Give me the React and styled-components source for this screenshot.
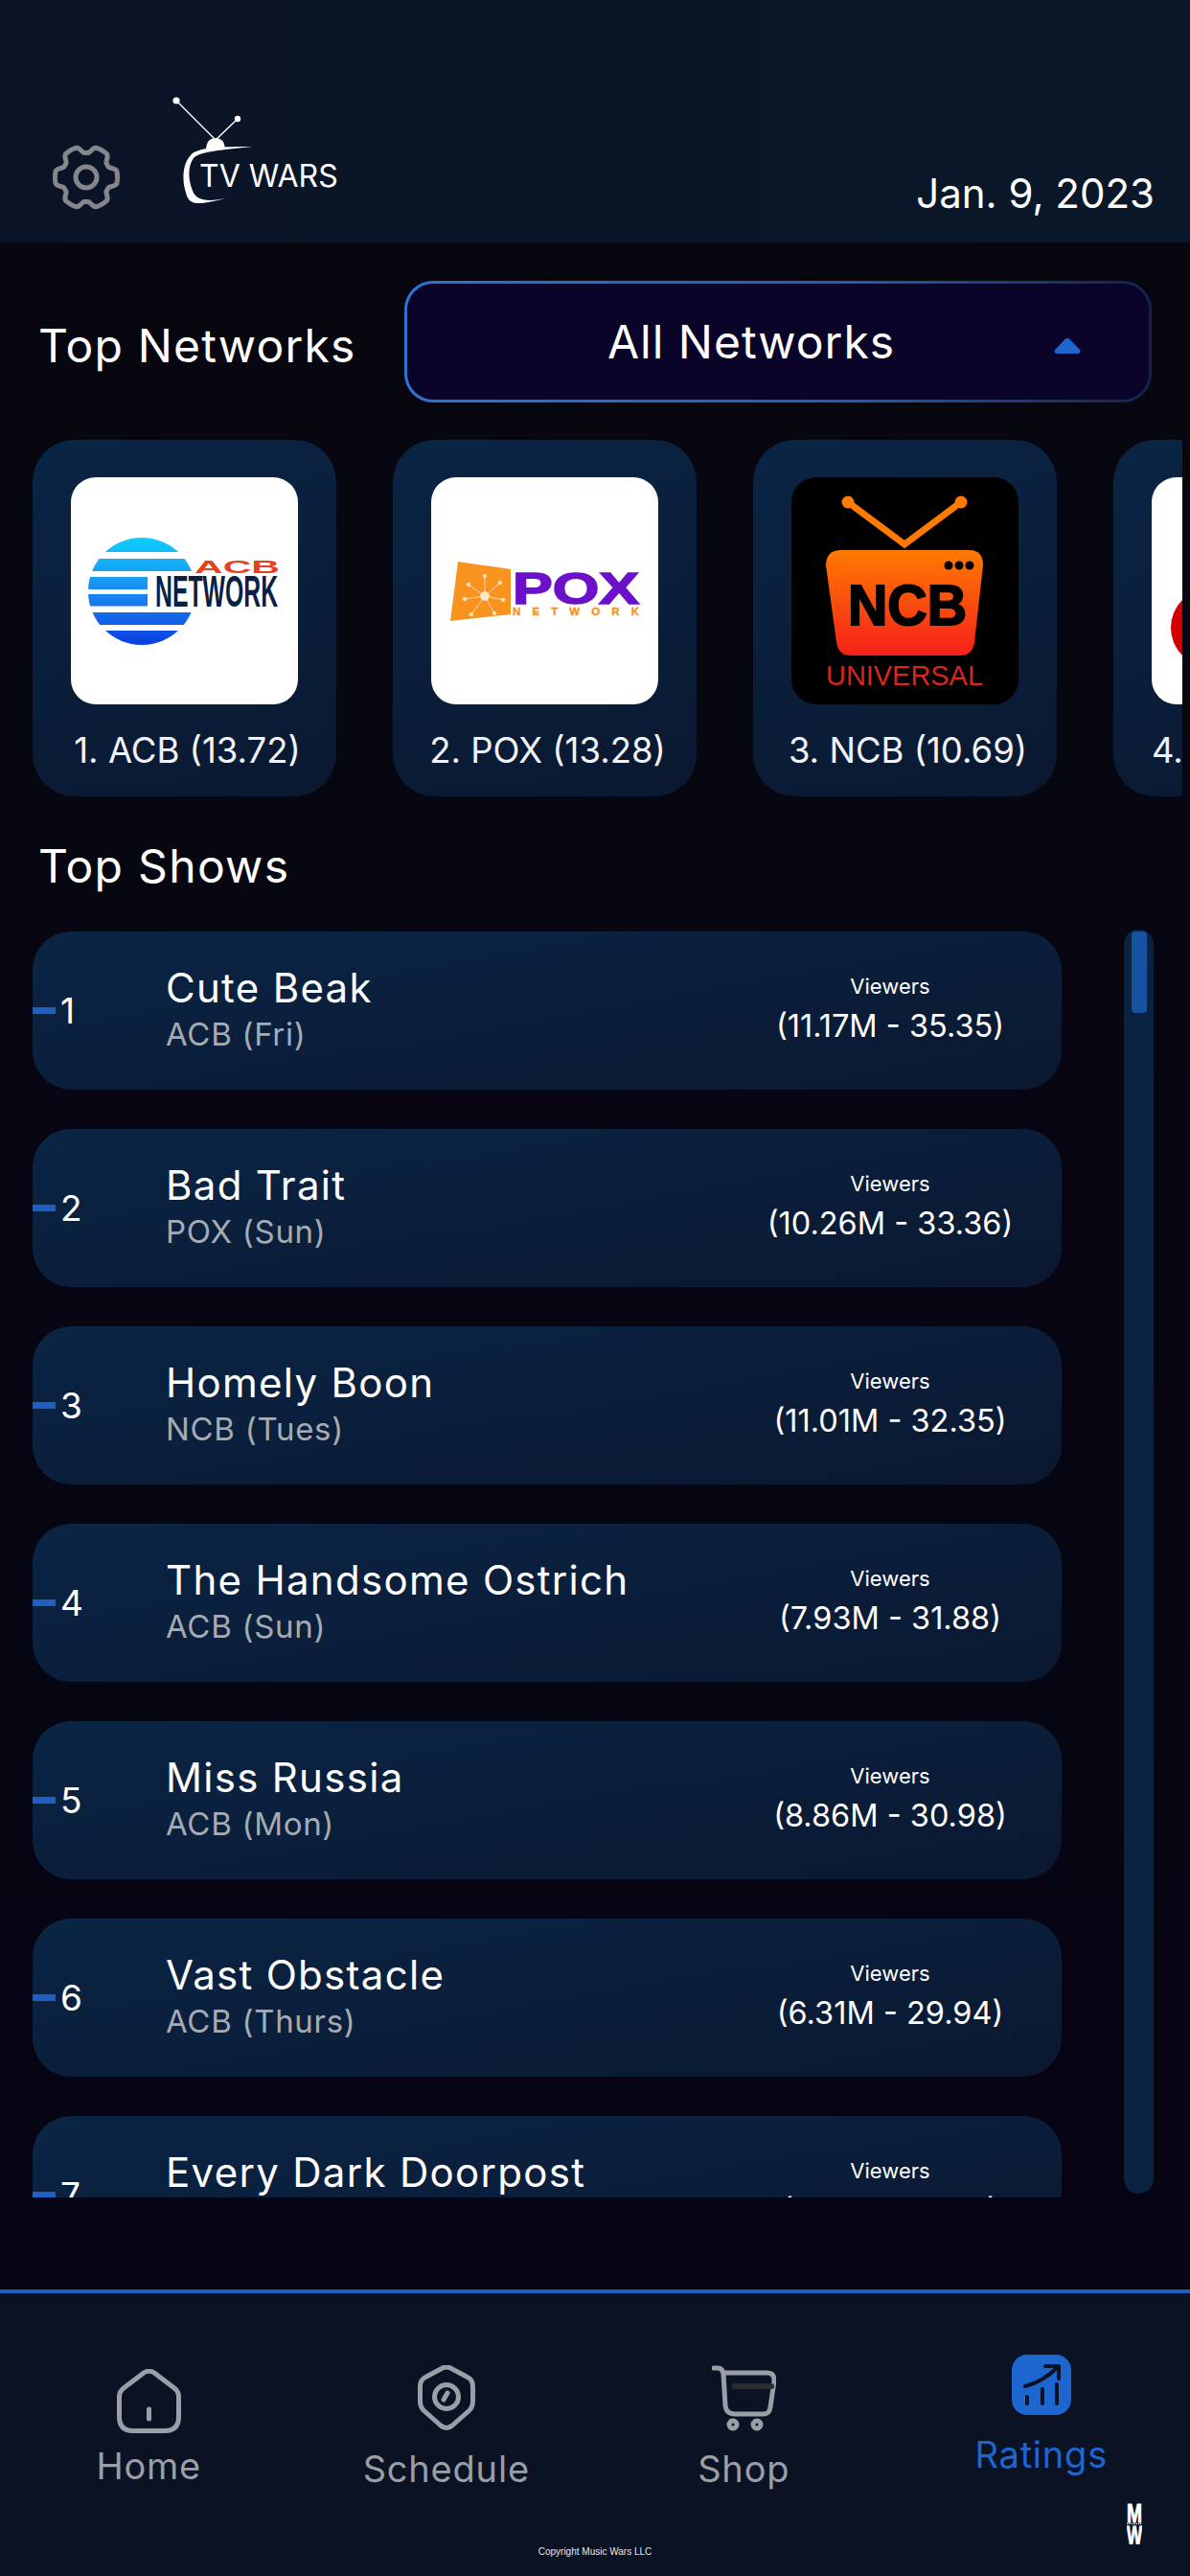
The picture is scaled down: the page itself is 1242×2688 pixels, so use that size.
import React from "react";
import styled, { createGlobalStyle } from "styled-components";

const networks = [
  { label: "1. ACB (13.72)", logo: "acb" },
  { label: "2. POX (13.28)", logo: "pox" },
  { label: "3. NCB (10.69)", logo: "ncb" },
  { label: "4.", logo: "red", partial: true },
];

const shows = [
  { title: "Cute Beak", sub: "ACB (Fri)", range: "(11.17M - 35.35)" },
  { title: "Bad Trait", sub: "POX (Sun)", range: "(10.26M - 33.36)" },
  { title: "Homely Boon", sub: "NCB (Tues)", range: "(11.01M - 32.35)" },
  { title: "The Handsome Ostrich", sub: "ACB (Sun)", range: "(7.93M - 31.88)" },
  { title: "Miss Russia", sub: "ACB (Mon)", range: "(8.86M - 30.98)" },
  { title: "Vast Obstacle", sub: "ACB (Thurs)", range: "(6.31M - 29.94)" },
  { title: "Every Dark Doorpost", sub: "", range: "(6.02M - 29.11)" },
];

// six blunt teeth with narrow notches between them
const gearPath = () => {
  const pts = [];
  for (let i = 0; i < 180; i++) {
    const deg = i * 2;
    const d = Math.abs(((deg + 30) % 60) - 30);
    const s = Math.min(1, Math.max(0, (d - 11) / 15));
    const r = 32.5 - 7 * s * s * (3 - 2 * s);
    const a = (deg * Math.PI) / 180;
    pts.push(`${(35 + r * Math.cos(a)).toFixed(2)} ${(34 + r * Math.sin(a)).toFixed(2)}`);
  }
  return `M${pts.join("L")}Z`;
};

const GearIcon = () => (
  <GearSvg viewBox="0 0 70 68" fill="none" stroke="#85878c" strokeWidth="5">
    <path d={gearPath()} strokeLinejoin="round" />
    <circle cx="35" cy="34" r="11" />
  </GearSvg>
);

const TvLogo = () => (
  <LogoSvg viewBox="0 0 185 120">
    <g fill="#fff">
      <circle cx="9" cy="10" r="3.6" />
      <circle cx="73" cy="29" r="3.2" />
      <path d="M9 10 L50 51 M73 29 L50 51" stroke="#fff" strokeWidth="1.4" />
      <path d="M40 60 Q41 49 50 49 Q59 49 60 60 Z" />
      <path d="M89 58 C62 58 30 58 24 67 C15 76 15 95 19 106 C22 119 30 120 60 112 C40 116 30 114 26 104 C21 92 21 78 27 70 C33 63 62 61 89 58 Z" />
    </g>
    <LogoText x="33" y="100">TV WARS</LogoText>
  </LogoSvg>
);

const AcbLogo = () => (
  <svg viewBox="0 0 237 237" width="237" height="237">
    <defs>
      <clipPath id="acbDisc">
        <circle cx="74" cy="119" r="56" />
      </clipPath>
      <linearGradient id="acbFade" gradientUnits="userSpaceOnUse" x1="0" y1="63" x2="0" y2="175">
        <stop offset="0" stopColor="#10cdfb" />
        <stop offset="0.5" stopColor="#1a8bf0" />
        <stop offset="1" stopColor="#0a3ee0" />
      </linearGradient>
    </defs>
    <g clipPath="url(#acbDisc)" fill="url(#acbFade)">
      <rect x="0" y="63" width="150" height="15" />
      <rect x="0" y="85" width="150" height="13" />
      <rect x="0" y="104" width="80" height="13" />
      <rect x="0" y="122" width="80" height="12.5" />
      <rect x="0" y="141" width="150" height="13" />
      <rect x="0" y="160" width="150" height="15" />
    </g>
    <text x="129" y="100" fontFamily="Liberation Sans" fontWeight="700" fontSize="18" fill="#e8401c" textLength="89" lengthAdjust="spacingAndGlyphs">
      ACB
    </text>
    <text transform="translate(88 135) scale(0.539 1)" fontFamily="Liberation Sans" fontWeight="700" fontSize="46" fill="#0a1f44">
      NETWORK
    </text>
  </svg>
);

const PoxLogo = () => {
  const spokes = [
    [56, 103],
    [39, 112],
    [35, 127],
    [42, 143],
    [66, 142],
    [75, 128],
    [72, 110],
  ];
  return (
    <svg viewBox="0 0 237 237" width="237" height="237">
      <polygon points="28,88 83,96 83,143 20,150" fill="#f7931e" />
      <g stroke="#ffe8c8" strokeWidth="0.8" fill="#ffe8c8">
        <circle cx="56" cy="124" r="4.5" />
        {spokes.map(([x, y]) => (
          <g key={`${x}-${y}`}>
            <line x1="56" y1="124" x2={x} y2={y} />
            <circle cx={x} cy={y} r="1.800" />
          </g>
        ))}
      </g>
      <text x="85" y="132" fontFamily="Liberation Sans" fontWeight="700" fontSize="47" fill="#6a11c9" stroke="#6a11c9" strokeWidth="1.6" textLength="132" lengthAdjust="spacingAndGlyphs">
        POX
      </text>
      <text x="85" y="143.500" fontFamily="Liberation Sans" fontWeight="700" fontSize="11.500" fill="#f7931e" stroke="#f7931e" strokeWidth="0.4" textLength="132">
        NETWORK
      </text>
    </svg>
  );
};

const NcbLogo = () => (
  <svg viewBox="0 0 237 237" width="237" height="237">
    <defs>
      <linearGradient id="ncbFade" x1="0" y1="0" x2="0" y2="1">
        <stop offset="0" stopColor="#ff7a00" />
        <stop offset="1" stopColor="#f5211b" />
      </linearGradient>
    </defs>
    <path d="M59 26 L118 70 L177 26" fill="none" stroke="#ff7a00" strokeWidth="7" strokeLinejoin="miter" />
    <circle cx="59" cy="26" r="6.5" fill="#ff7a00" />
    <circle cx="177" cy="26" r="6.5" fill="#ff7a00" />
    <path d="M52 76 H186 Q200 76 200 92 L191 172 Q189 186 176 186 H62 Q49 186 47 172 L36 92 Q36 76 52 76 Z" fill="url(#ncbFade)" />
    <circle cx="164" cy="92" r="4.5" />
    <circle cx="175" cy="92" r="4.5" />
    <circle cx="186" cy="92" r="4.5" />
    <text x="59" y="154" fontFamily="Liberation Sans" fontWeight="700" fontSize="60" fill="#000" stroke="#000" strokeWidth="2" textLength="124" lengthAdjust="spacingAndGlyphs">
      NCB
    </text>
    <text x="36" y="217" fontFamily="Liberation Sans" fontSize="30" fill="#d9261c" textLength="164" lengthAdjust="spacingAndGlyphs">
      UNIVERSAL
    </text>
  </svg>
);

const RedLogo = () => (
  <svg viewBox="0 0 237 237" width="237" height="237">
    <circle cx="61" cy="157" r="41" fill="#d40000" />
  </svg>
);

const logos = { acb: AcbLogo, pox: PoxLogo, ncb: NcbLogo, red: RedLogo };

const HomeIcon = () => (
  <NavSvg width="67" height="67" viewBox="0 0 67 67">
    <path d="M28 4 Q33.500 0.500 39 4 L60 20 Q64.500 23.500 64.500 29 V50 Q64.500 64.500 50 64.500 H17 Q2.500 64.500 2.500 50 V29 Q2.500 23.500 7 20 Z" />
    <path d="M33.500 42 V52" />
  </NavSvg>
);

const ScheduleIcon = () => (
  <NavSvg width="60" height="69" viewBox="0 0 60 69">
    <path d="M24 4 Q30 0 36 4 L51 12 Q57.500 15 57.500 22 V38 Q57.500 44 53 48 L36 63 Q30 68 24 63 L7 48 Q2.500 44 2.500 38 V22 Q2.500 15 9 12 Z" />
    <circle cx="30" cy="33" r="12.500" />
    <path d="M31 29 L27 36" />
  </NavSvg>
);

const ShopIcon = () => (
  <NavSvg width="67" height="69" viewBox="0 0 67 69">
    <path d="M2 3 H6 Q11 3 12 9 L14 42 Q15 51 24 51 H54 Q60 51 61 44 L65 16 Q65 8 58 8 H13" />
    <path d="M24 22 H62" stroke="#2a2c30" strokeWidth="6" />
    <circle cx="22" cy="62" r="4" />
    <circle cx="47" cy="62" r="4" />
  </NavSvg>
);

const RatingsIcon = () => (
  <svg width="62" height="63" viewBox="0 0 62 63">
    <rect width="62" height="63" rx="16" fill="#1e66cf" />
    <g fill="none" stroke="#0a1224" strokeWidth="4" strokeLinecap="round" strokeLinejoin="round">
      <path d="M14 33 Q33 28 48 13" />
      <path d="M35 12 H49 V25" />
      <path d="M16 44 V51 M32 36 V51 M47 31 V51" />
    </g>
  </svg>
);

const navItems = [
  { label: "Home", icon: HomeIcon, top: 79, gap: 11 },
  { label: "Schedule", icon: ScheduleIcon, top: 75, gap: 16 },
  { label: "Shop", icon: ShopIcon, top: 75, gap: 16 },
  { label: "Ratings", icon: RatingsIcon, top: 64, gap: 18, active: true },
];

export default function App() {
  return (
    <Screen>
      <GlobalStyle />
      <Header>
        <GearIcon />
        <TvLogo />
        <DateText>Jan. 9, 2023</DateText>
      </Header>

      <FilterBar>
        <SectionTitle>Top Networks</SectionTitle>
        <Select>
          <SelectText>All Networks</SelectText>
          <Caret viewBox="0 0 28 17">
            <path d="M12 1.500 Q14 0 16 1.500 L27 13 Q28.500 16.500 25 17 H3 Q-0.500 16.500 1 13 Z" />
          </Caret>
        </Select>
      </FilterBar>

      <NetworkStrip>
        {networks.map((n) => {
          const Logo = logos[n.logo];
          return (
            <NetworkCard key={n.logo}>
              <LogoTile $dark={n.logo === "ncb"}>
                <Logo />
              </LogoTile>
              <NetworkLabel $partial={n.partial}>{n.label}</NetworkLabel>
            </NetworkCard>
          );
        })}
      </NetworkStrip>

      <ShowsTitle>Top Shows</ShowsTitle>

      <ShowsArea>
        <ShowList>
          {shows.map((s, i) => (
            <ShowRow key={s.title}>
              <Rank>
                <RankTick />
                <RankNumber>{i + 1}</RankNumber>
              </Rank>
              <ShowInfo>
                <ShowTitle>{s.title}</ShowTitle>
                <ShowSub>{s.sub}</ShowSub>
              </ShowInfo>
              <Viewers>
                <ViewersLabel>Viewers</ViewersLabel>
                <ViewersRange>{s.range}</ViewersRange>
              </Viewers>
            </ShowRow>
          ))}
        </ShowList>
        <ScrollTrack>
          <ScrollThumb />
        </ScrollTrack>
      </ShowsArea>

      <BottomNav>
        <NavGrid>
          {navItems.map((item) => {
            const Icon = item.icon;
            return (
              <NavItem key={item.label} $top={item.top} $gap={item.gap}>
                <Icon />
                <NavLabel $active={item.active}>{item.label}</NavLabel>
              </NavItem>
            );
          })}
        </NavGrid>
        <Copyright>Copyright Music Wars LLC</Copyright>
        <MwMark viewBox="0 0 16 43">
          <text transform="translate(0 20) scale(0.71 1)" fontFamily="Liberation Sans" fontWeight="700" fontSize="27" fill="#fff" stroke="#fff" strokeWidth="1">
            M
          </text>
          <line x1="0" y1="21.500" x2="16" y2="21.500" stroke="#fff" strokeWidth="1.500" strokeDasharray="1 1" />
          <text transform="translate(0 43) scale(0.63 1)" fontFamily="Liberation Sans" fontWeight="700" fontSize="27" fill="#fff" stroke="#fff" strokeWidth="1">
            W
          </text>
        </MwMark>
      </BottomNav>
    </Screen>
  );
}

const GlobalStyle = createGlobalStyle`
  html, body {
    margin: 0;
    padding: 0;
    background: #06050f;
  }
  * {
    box-sizing: border-box;
  }
`;

const Screen = styled.div`
  width: 1242px;
  height: 2688px;
  overflow: hidden;
  display: flex;
  flex-direction: column;
  background: linear-gradient(180deg, #07070f 0%, #060414 100%);
  color: #fff;
  font-family: Inter, "Open Sans", sans-serif;
`;

const Header = styled.header`
  flex: none;
  height: 253px;
  display: flex;
  align-items: flex-end;
  padding: 0 37px 0 55px;
  background: linear-gradient(90deg, #0a1426 0%, #0a1829 100%);
`;

const GearSvg = styled.svg`
  width: 70px;
  height: 68px;
  margin-bottom: 34px;
  flex: none;
`;

const LogoSvg = styled.svg`
  width: 185px;
  height: 120px;
  margin: 0 0 38px 50px;
  flex: none;
`;

const LogoText = styled.text`
  font-family: Inter, sans-serif;
  font-size: 32px;
  fill: #fff;
`;

const DateText = styled.div`
  margin-left: auto;
  margin-bottom: 24px;
  font-size: 42px;
  line-height: 54px;
`;

const FilterBar = styled.div`
  flex: none;
  margin-top: 40px;
  height: 127px;
  display: flex;
  align-items: center;
  justify-content: space-between;
  padding: 0 40px 0 40px;
`;

const SectionTitle = styled.h2`
  margin: 8px 0 0;
  font-size: 48px;
  line-height: 58px;
  font-weight: 400;
  letter-spacing: 1.200px;
`;

const Select = styled.div`
  position: relative;
  width: 780px;
  height: 127px;
  display: flex;
  align-items: center;
  justify-content: center;
  border: 3px solid transparent;
  border-radius: 30px;
  background: linear-gradient(#0a0528, #0a0528) padding-box,
    linear-gradient(90deg, #2f74d0 0%, #2a5aa8 60%, #12224a 100%) border-box;
`;

const SelectText = styled.span`
  font-size: 48px;
  line-height: 58px;
  letter-spacing: 1px;
  margin-right: 56px;
`;

const Caret = styled.svg`
  position: absolute;
  right: 71px;
  top: 56px;
  width: 28px;
  height: 17px;
  fill: #1f66cc;
`;

const NetworkStrip = styled.div`
  flex: none;
  width: 1234px;
  margin-top: 39px;
  padding-left: 34px;
  display: flex;
  gap: 59px;
  overflow: hidden;
`;

const NetworkCard = styled.div`
  flex: none;
  width: 317px;
  height: 372px;
  padding-top: 39px;
  display: flex;
  flex-direction: column;
  align-items: center;
  border-radius: 44px;
  background: linear-gradient(160deg, #0a2545 0%, #0a1830 100%);
`;

const LogoTile = styled.div`
  width: 237px;
  height: 237px;
  flex: none;
  border-radius: 26px;
  overflow: hidden;
  background: ${(p) => (p.$dark ? "#000" : "#fff")};
`;

const NetworkLabel = styled.div`
  width: 100%;
  margin-top: 25px;
  font-size: 36.500px;
  line-height: 46px;
  color: #f1f3f6;
  white-space: nowrap;
  text-align: ${(p) => (p.$partial ? "left" : "center")};
  padding-left: ${(p) => (p.$partial ? "40px" : "6px")};
`;

const ShowsTitle = styled.h2`
  flex: none;
  margin: 44px 0 0 40px;
  height: 97px;
  font-size: 48px;
  line-height: 58px;
  font-weight: 400;
  letter-spacing: 1.300px;
`;

const ShowsArea = styled.div`
  flex: none;
  height: 1321px;
  display: flex;
  align-items: flex-start;
  padding-left: 34px;
`;

const ShowList = styled.div`
  width: 1074px;
  height: 100%;
  display: flex;
  flex-direction: column;
  gap: 41px;
  overflow: hidden;
`;

const ShowRow = styled.div`
  flex: none;
  height: 165px;
  display: flex;
  align-items: center;
  padding-right: 29px;
  border-radius: 40px;
  background: linear-gradient(170deg, #0a2545 0%, #0a1830 100%);
`;

const Rank = styled.div`
  flex: none;
  width: 139px;
  display: flex;
  align-items: center;
  gap: 5px;
`;

const RankTick = styled.span`
  width: 24px;
  height: 7px;
  background: #1f5fbf;
`;

const RankNumber = styled.span`
  font-size: 37px;
  line-height: 44px;
`;

const ShowInfo = styled.div`
  flex: 1;
  min-width: 0;
`;

const ShowTitle = styled.div`
  font-size: 42px;
  line-height: 48px;
  letter-spacing: 1.300px;
  color: #fff;
`;

const ShowSub = styled.div`
  min-height: 48px;
  font-size: 33px;
  line-height: 48px;
  letter-spacing: 0.700px;
  color: #a6abb3;
`;

const Viewers = styled.div`
  flex: none;
  width: 300px;
  padding-bottom: 8px;
  text-align: center;
`;

const ViewersLabel = styled.div`
  font-size: 22px;
  line-height: 40px;
`;

const ViewersRange = styled.div`
  font-size: 32.500px;
  line-height: 44px;
`;

const ScrollTrack = styled.div`
  flex: none;
  width: 31px;
  height: 1319px;
  margin: -2px 0 0 65px;
  padding: 2px 7px 0 8px;
  border-radius: 16px;
  background: #0a2342;
`;

const ScrollThumb = styled.div`
  width: 100%;
  height: 85px;
  border-radius: 4px;
  background: #17519f;
`;

const BottomNav = styled.nav`
  position: relative;
  margin-top: auto;
  flex: none;
  height: 299px;
  border-top: 4px solid #1f5fbf;
  background: #0a1224;
`;

const NavGrid = styled.div`
  display: grid;
  grid-template-columns: repeat(4, 310.5px);
`;

const NavItem = styled.div`
  height: 246px;
  display: flex;
  flex-direction: column;
  align-items: center;
  padding-top: ${(p) => p.$top}px;
  gap: ${(p) => p.$gap}px;
`;

const NavSvg = styled.svg`
  flex: none;
  fill: none;
  stroke: #9a9ea6;
  stroke-width: 5;
  stroke-linecap: round;
  stroke-linejoin: round;
`;

const NavLabel = styled.span`
  font-size: 38px;
  line-height: 46px;
  letter-spacing: 0.800px;
  color: ${(p) => (p.$active ? "#1f66cc" : "#9a9ea6")};
`;

const Copyright = styled.div`
  margin-top: 18px;
  text-align: center;
  font-family: "Liberation Sans", Arial, sans-serif;
  font-size: 10px;
  line-height: 12px;
  color: #e8e8e8;
`;

const MwMark = styled.svg`
  position: absolute;
  left: 1176px;
  top: 219px;
  width: 16px;
  height: 43px;
`;
